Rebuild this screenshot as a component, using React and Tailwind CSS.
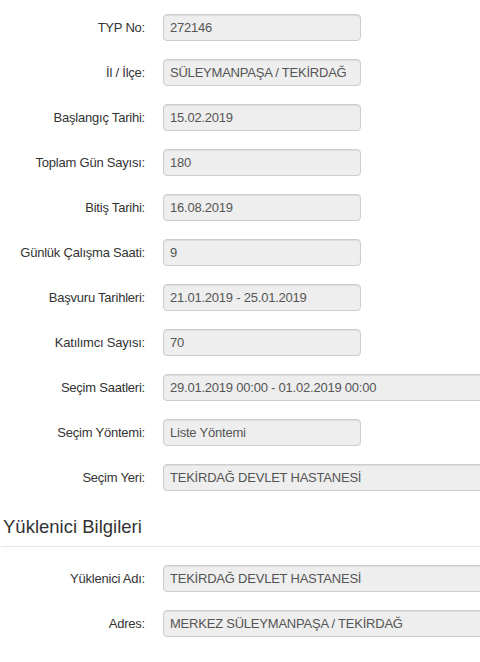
import React from "react";

const rows = [
  ["TYP No:", "272146", false],
  ["İl / İlçe:", "SÜLEYMANPAŞA / TEKİRDAĞ", false],
  ["Başlangıç Tarihi:", "15.02.2019", false],
  ["Toplam Gün Sayısı:", "180", false],
  ["Bitiş Tarihi:", "16.08.2019", false],
  ["Günlük Çalışma Saati:", "9", false],
  ["Başvuru Tarihleri:", "21.01.2019 - 25.01.2019", false],
  ["Katılımcı Sayısı:", "70", false],
  ["Seçim Saatleri:", "29.01.2019 00:00 - 01.02.2019 00:00", true],
  ["Seçim Yöntemi:", "Liste Yöntemi", false],
  ["Seçim Yeri:", "TEKİRDAĞ DEVLET HASTANESİ", true],
];

const rows2 = [
  ["Yüklenici Adı:", "TEKİRDAĞ DEVLET HASTANESİ", true],
  ["Adres:", "MERKEZ SÜLEYMANPAŞA / TEKİRDAĞ", true],
];

function Row({ label, value, wide }) {
  return (
    <div className="flex items-center h-[27px] mb-[18px] tracking-[-0.22px]">
      <div className="w-[145px] shrink-0 text-right text-[13px] text-[#333]">{label}</div>
      <div
        className={
          "ml-[18px] shrink-0 h-[27px] flex items-center px-[6px] bg-[#eeeeee] border border-[#cccccc] rounded-[4px] text-[13px] text-[#555] shadow-[inset_0_1px_1px_rgba(0,0,0,0.075)] " +
          (wide ? "w-[400px]" : "w-[198px]")
        }
      >
        {value}
      </div>
    </div>
  );
}

export default function App() {
  return (
    <div className="w-[480px] h-[662px] overflow-hidden bg-white font-['Liberation_Sans',Arial,sans-serif]">
      <div className="pt-[14px]">
        {rows.map(([l, v, w]) => (
          <Row key={l} label={l} value={v} wide={w} />
        ))}
      </div>
      <div className="pl-[3px] text-[18.5px] leading-[20px] text-[#333] mt-[26px]">Yüklenici Bilgileri</div>
      <div className="mt-[9px] ml-[1px] border-t border-[#e5e5e5]" />
      <div className="pt-[18px]">
        {rows2.map(([l, v, w]) => (
          <Row key={l} label={l} value={v} wide={w} />
        ))}
      </div>
    </div>
  );
}
